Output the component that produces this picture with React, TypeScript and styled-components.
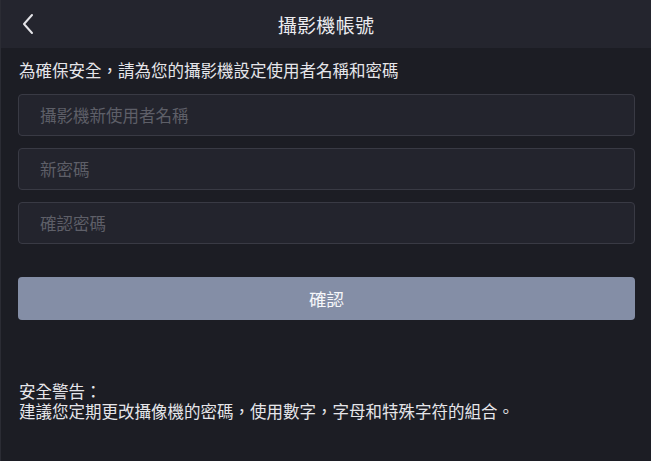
import { FC } from 'react';
import styled, { createGlobalStyle } from 'styled-components';

const GlobalStyle = createGlobalStyle`
  html, body {
    margin: 0;
    padding: 0;
    background: #1c1d24;
  }
  body {
    font-family: 'Noto Sans CJK TC', 'Noto Sans', sans-serif;
  }
`;

const Page = styled.div`
  width: 651px;
  height: 461px;
  display: flex;
  flex-direction: column;
  background: #1c1d24;
  border-left: 1px solid #2b2c34;
  box-sizing: border-box;
  color: #e8e8ec;
`;

const Header = styled.header`
  height: 48px;
  flex-shrink: 0;
  background: #24252e;
  display: grid;
  grid-template-columns: 60px 1fr 60px;
  align-items: center;
`;

const BackButton = styled.button`
  background: none;
  border: none;
  padding: 0 0 0 20px;
  height: 48px;
  display: flex;
  align-items: center;
  cursor: pointer;
`;

const Title = styled.h1`
  margin: 0;
  text-align: center;
  font-size: 19px;
  font-weight: 400;
  color: #ececf0;
  letter-spacing: 0.3px;
`;

const Body = styled.main`
  padding: 11px 17px 0 17px;
  display: flex;
  flex-direction: column;
`;

const Intro = styled.p`
  margin: 0 0 13px 1px;
  font-size: 16.5px;
  line-height: 22px;
  color: #e6e6ea;
`;

const Fields = styled.div`
  display: flex;
  flex-direction: column;
  gap: 12px;
`;

const Field = styled.input`
  box-sizing: border-box;
  width: 617px;
  height: 42px;
  background: #23242d;
  border: 1px solid #393a44;
  border-radius: 4px;
  padding: 0 21px;
  font-family: inherit;
  font-size: 16.5px;
  color: #e6e6ea;
  outline: none;
  &::placeholder {
    color: #5e5f68;
  }
`;

const Confirm = styled.button`
  margin-top: 33px;
  width: 617px;
  height: 43px;
  background: #848ea6;
  border: none;
  border-radius: 4px;
  font-family: inherit;
  font-size: 17.5px;
  color: #f6f7fa;
  cursor: pointer;
`;

const Warning = styled.div`
  margin: 61px 0 0 1px;
  font-size: 16.5px;
  line-height: 20px;
  color: #e6e6ea;
`;

const WarningLine = styled.p`
  margin: 0;
`;

const ChevronLeft: FC = () => (
  <svg width="14" height="22" viewBox="0 0 14 22">
    <path
      d="M11 2 L3 11 L11 20"
      fill="none"
      stroke="#e4e4e8"
      strokeWidth="2"
      strokeLinecap="round"
      strokeLinejoin="round"
    />
  </svg>
);

const App: FC = () => {
  return (
    <>
      <GlobalStyle />
      <Page>
        <Header>
          <BackButton aria-label='返回'>
            <ChevronLeft />
          </BackButton>
          <Title>攝影機帳號</Title>
          <span />
        </Header>
        <Body>
          <Intro>為確保安全，請為您的攝影機設定使用者名稱和密碼</Intro>
          <Fields>
            <Field placeholder='攝影機新使用者名稱' />
            <Field type='password' placeholder='新密碼' />
            <Field type='password' placeholder='確認密碼' />
          </Fields>
          <Confirm>確認</Confirm>
          <Warning>
            <WarningLine>安全警告：</WarningLine>
            <WarningLine>
              建議您定期更改攝像機的密碼，使用數字，字母和特殊字符的組合。
            </WarningLine>
          </Warning>
        </Body>
      </Page>
    </>
  );
};

export default App;
